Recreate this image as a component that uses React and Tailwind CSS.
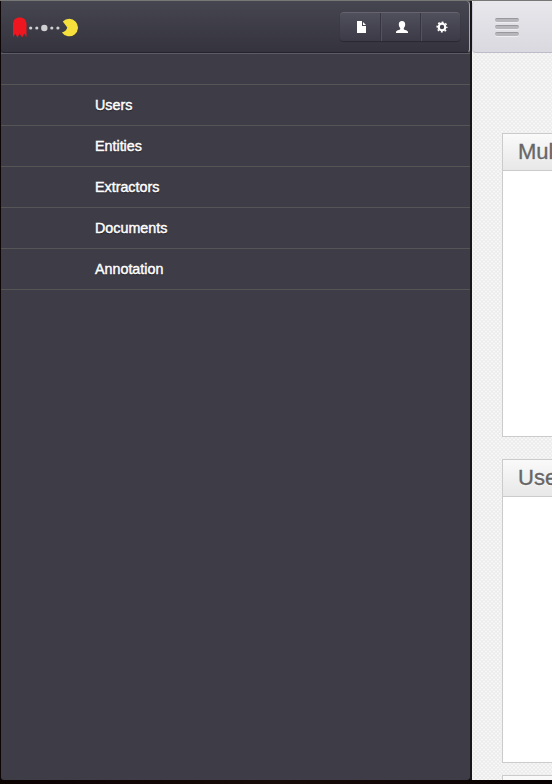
import React from "react";

const items = ["Users", "Entities", "Extractors", "Documents", "Annotation"];

function PacLogo() {
  return (
    <svg width="68" height="22" viewBox="0 0 68 22" className="ml-[11px] mt-[1px] block">
      <path
        d="M1 21V8C1 4.200 3.600 1.500 7.700 1.500s6.800 2.700 6.800 6.500v13l-2.200-3.200-2.200 3.600-2.400-3.600-2.200 3.600-2.200-3.600z"
        fill="#ef1620"
      />
      <g fill="#d0d0d3">
        <circle cx="18.700" cy="12" r="1.600" />
        <circle cx="24.800" cy="12" r="1.600" />
        <circle cx="32.300" cy="12" r="3.200" />
        <circle cx="39.800" cy="12" r="1.600" />
        <circle cx="45.900" cy="12" r="1.600" />
      </g>
      <path d="M55.300 11.500L50.800 5.500A8.800 8.800 0 1 1 49.900 16.500Q54.200 15.500 55.300 11.500Z" fill="#f7e03c" />
    </svg>
  );
}

function FileIcon() {
  return (
    <svg width="10" height="12" viewBox="0 0 10 12" fill="#fff">
      <path d="M0 0h5v5h4v7H0z" />
      <path d="M6 1l3 3H6z" />
    </svg>
  );
}

function UserIcon() {
  return (
    <svg width="12" height="12" viewBox="0 0 12 12" fill="#fff">
      <path d="M6 0C3.800 0 2.800 1.300 2.800 3.300c0 1.700.6 3 1.400 3.700v1.200C4 9 0 9.200 0 11V12h12v-1c0-1.800-4-2-4.200-2.800V7C8.600 6.300 9.200 5 9.200 3.300 9.200 1.300 8.200 0 6 0z" />
    </svg>
  );
}

function GearIcon() {
  return (
    <svg width="12" height="12" viewBox="0 0 12 12" fill="none" stroke="#fff">
      <circle cx="6" cy="6" r="3.300" strokeWidth="2.200" />
      <circle cx="6" cy="6" r="4.800" strokeWidth="1.500" strokeDasharray="1.850 1.920" strokeDashoffset=".92" />
    </svg>
  );
}

function Panel({ title, className }) {
  return (
    <section className={`w-[400px] shrink-0 border border-[#cbcbcb] bg-white ${className}`}>
      <h2 className="h-[37px] border-b border-[#cbcbcb] bg-linear-to-b from-[#fafafa] to-[#e8e8e8] pl-[15px] text-[22px] leading-[35px] text-[#666] [-webkit-text-stroke:0.35px_#666] [text-shadow:0_1px_0_#fff]">
        {title}
      </h2>
    </section>
  );
}

export default function App() {
  return (
    <div className="flex h-[784px] w-[552px] flex-col overflow-hidden bg-[#0b0505] font-['Liberation_Sans',Arial,sans-serif]">
      <div className="h-px shrink-0 bg-[#777775]" />
      <div className="flex h-[779px] shrink-0">
        <aside className="ml-px w-[469px] shrink-0 overflow-hidden rounded-b-[3px] bg-[#3e3d47]">
          <header className="flex h-[52px] items-center justify-between rounded-r-[4px] rounded-bl-[4px] border-r border-b border-r-[#a6a5b1] border-b-[#25242c] bg-linear-to-b from-[#464650] to-[#35343e]">
            <PacLogo />
            <div className="mr-[9px] flex h-[29px] overflow-hidden rounded-[4px] border-t border-[#65646f] bg-linear-to-b from-[#50505c] to-[#3b3a46] shadow-[0_1px_1px_#292831]">
              <button className="flex w-[41px] items-center justify-center border-r border-[#363540] pl-[3px]"><FileIcon /></button>
              <button className="flex w-[40px] items-center justify-center border-r border-l border-r-[#363540] border-l-[#53525f] pl-[2px]"><UserIcon /></button>
              <button className="flex w-[39px] items-center justify-center border-l border-[#53525f] pl-[2px]"><GearIcon /></button>
            </div>
          </header>
          <nav>
            <div className="h-[32px] border-t border-b border-t-[#5d5c67] border-b-[#555555]" />
            {items.map((item) => (
              <a key={item} className="block h-[41px] border-b border-[#555555] pl-[94px] text-[14.3px] leading-[40px] text-white [-webkit-text-stroke:0.45px_white] [text-shadow:0_1px_1px_#18171d]">
                {item}
              </a>
            ))}
          </nav>
        </aside>
        <div className="w-[2px] shrink-0 bg-[#171719]" />
        <main className="flex w-[80px] flex-col overflow-hidden bg-[#f8f8f8] bg-[repeating-linear-gradient(45deg,#e7e7e780_0px,#e7e7e780_1px,transparent_1px,transparent_2.828px),repeating-linear-gradient(-45deg,#e7e7e780_0px,#e7e7e780_1px,transparent_1px,transparent_2.828px)]">
          <div className="flex h-[52px] w-[100px] shrink-0 flex-col gap-[3px] rounded-l-[4px] border-b border-l border-b-[#bdbac9] border-l-[#cdccd6] bg-linear-to-b from-[#e8e7ec] to-[#dad9df] pt-[17px] pl-[22px]">
            <i className="h-[4px] w-[24px] rounded-full border-t border-[#98989d] bg-[#b7b7bb] shadow-[0_1px_0_#eeeef2]" />
            <i className="h-[4px] w-[24px] rounded-full border-t border-[#98989d] bg-[#b7b7bb] shadow-[0_1px_0_#eeeef2]" />
            <i className="h-[4px] w-[24px] rounded-full border-t border-[#98989d] bg-[#b7b7bb] shadow-[0_1px_0_#eeeef2]" />
          </div>
          <Panel title="Multi" className="mt-[80px] ml-[30px] h-[304px]" />
          <Panel title="Users" className="mt-[22px] ml-[30px] h-[304px]" />
          <Panel title="" className="mt-[12px] ml-[30px] h-[304px]" />
        </main>
      </div>
      <div className="h-[4px] shrink-0 bg-linear-to-r from-[#0b0202] via-[#180c0a] to-[#080202]" />
    </div>
  );
}
